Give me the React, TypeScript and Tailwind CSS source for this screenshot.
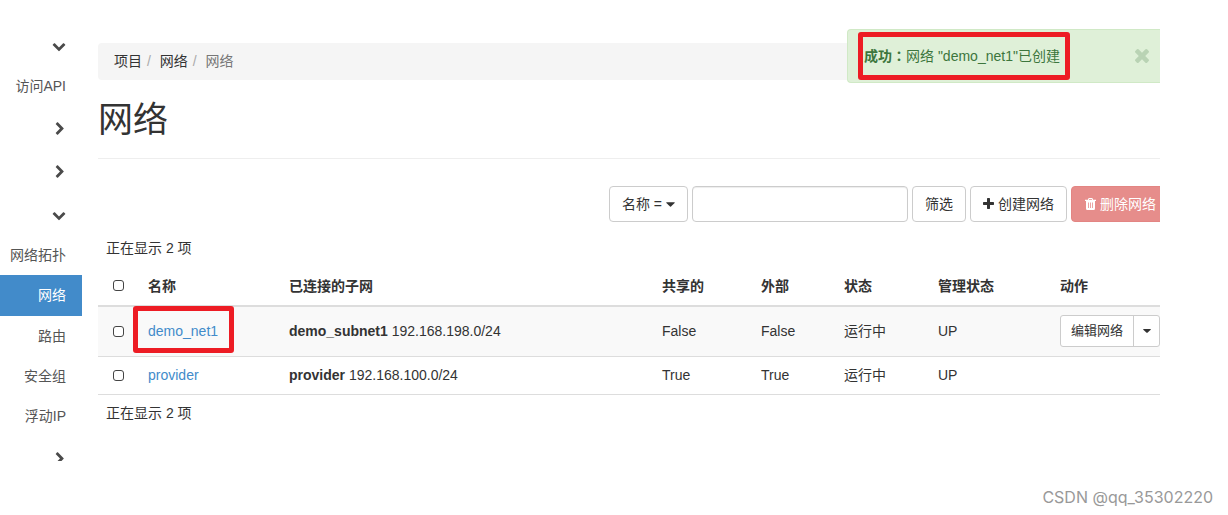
import React from "react";

const paths = {
  down: "M1683 808l-742 741q-19 19-45 19t-45-19l-742-741q-19-19-19-45.500t19-45.500l166-165q19-19 45-19t45 19l531 531 531-531q19-19 45-19t45 19l166 165q19 19 19 45.500t-19 45.500z",
  right: "M1363 877l-742 742q-19 19-45 19t-45-19l-166-166q-19-19-19-45t19-45l531-531-531-531q-19-19-19-45t19-45l166-166q19-19 45-19t45 19l742 742q19 19 19 45t-19 45z",
  plus: "M1600 736v192q0 40-28 68t-68 28h-416v416q0 40-28 68t-68 28h-192q-40 0-68-28t-28-68v-416h-416q-40 0-68-28t-28-68v-192q0-40 28-68t68-28h416v-416q0-40 28-68t68-28h192q40 0 68 28t28 68v416h416q40 0 68 28t28 68z",
  times: "M1490 1322q0 40-28 68l-136 136q-28 28-68 28t-68-28l-294-294-294 294q-28 28-68 28t-68-28l-136-136q-28-28-28-68t28-68l294-294-294-294q-28-28-28-68t28-68l136-136q28-28 68-28t68 28l294 294 294-294q28-28 68-28t68 28l136 136q28 28 28 68t-28 68l-294 294 294 294q28 28 28 68z",
};

function Icon({ name, className, box = "0 0 1792 1792" }: { name: keyof typeof paths; className: string; box?: string }) {
  return (
    <svg viewBox={box} fill="currentColor" aria-hidden="true" className={className}>
      <path d={paths[name]} />
    </svg>
  );
}

function Caret({ className }: { className: string }) {
  return (
    <svg viewBox="0 0 10 5" fill="currentColor" aria-hidden="true" className={className}>
      <path d="M0.600 0H9.400Q10 .3 9.600 .8L5.500 4.800Q5 5.200 4.500 4.800L.4 .8Q0 .3 .6 0Z" />
    </svg>
  );
}

function Trash() {
  return (
    <svg viewBox="0 0 11 12" aria-hidden="true" className="h-3 w-[11px]">
      <path d="M3.500 2V.9Q3.500.5 4 .5H7Q7.500.5 7.500.9V2" fill="none" stroke="currentColor" />
      <path d="M0 1.800H11V3H10V10.500Q10 12 8.700 12H2.300Q1 12 1 10.500V3H0Z" fill="currentColor" />
      <path d="M3.500 4.500V10M5.500 4.500V10M7.500 4.500V10" stroke="#e68d8b" strokeWidth=".8" />
    </svg>
  );
}

function Group({ label, open }: { label: string; open?: boolean }) {
  return (
    <button aria-label={label} className="flex w-full shrink-0 justify-end pt-4 pr-4 pb-[13px] text-[#4a4a4a]">
      <Icon name={open ? "down" : "right"} className={open ? "size-[14px]" : "-mr-[1px] size-[14px]"} />
    </button>
  );
}

function NavLink({ label, active }: { label: string; active?: boolean }) {
  return (
    <a
      href="#"
      className={
        active
          ? "block bg-[#428bca] pt-[10px] pb-[11px] pr-4 text-right text-white"
          : "block py-[10px] pr-4 text-right text-[#555]"
      }
    >
      {label}
    </a>
  );
}

const btn = "flex h-9 shrink-0 items-center rounded border border-[#ccc] bg-white px-3 whitespace-nowrap";
const check = "block size-[11px] appearance-none rounded-[3px] border border-[#444] bg-white checked:bg-[#428bca]";

const rows = [
  { name: "demo_net1", subnet: "demo_subnet1", cidr: "192.168.198.0/24", flag: "False", marked: true },
  { name: "provider", subnet: "provider", cidr: "192.168.100.0/24", flag: "True", marked: false },
];

export default function App() {
  return (
    <div className="bg-white font-['Liberation_Sans','Noto_Sans_CJK_SC',sans-serif] text-sm leading-5 text-[#333]">
      <div className="relative flex gap-4 pr-[68px]">
        <nav aria-label="导航" className="flex h-[461px] w-[82px] shrink-0 flex-col overflow-hidden pt-[23px]">
          <Group label="项目" open />
          <NavLink label="访问API" />
          <Group label="计算" />
          <Group label="卷" />
          <Group label="网络" open />
          <NavLink label="网络拓扑" />
          <NavLink label="网络" active />
          <NavLink label="路由" />
          <NavLink label="安全组" />
          <NavLink label="浮动IP" />
          <Group label="对象存储" />
        </nav>

        <main className="relative min-w-0 flex-1 overflow-hidden pt-[43px]">
          <ol className="flex rounded bg-[#f5f5f5] px-4 pt-2 pb-[9px]">
            <li><a href="#">项目</a></li>
            <li className="before:px-[5px] before:text-[#aaa] before:content-['/\00a0']"><a href="#">网络</a></li>
            <li className="text-[#777] before:px-[5px] before:text-[#aaa] before:content-['/\00a0']">网络</li>
          </ol>

          <h1 className="border-b border-[#eee] pt-5 pb-[18px] text-[35px] leading-10">网络</h1>

          <form className="-mr-[10px] flex justify-end gap-1 pt-[27px]" onSubmit={(e) => e.preventDefault()}>
            <button type="button" className={btn + " gap-1"}>
              名称 =<Caret className="h-[5px] w-[9px]" />
            </button>
            <input
              aria-label="筛选条件"
              className="h-9 w-[216px] min-w-0 rounded border border-[#ccc] px-3 shadow-[inset_0_1px_1px_rgba(0,0,0,0.075)] outline-none"
            />
            <button className={btn}>筛选</button>
            <button type="button" className={btn + " gap-1"}>
              <Icon name="plus" box="192 128 1408 1536" className="h-3 w-[11px]" />
              创建网络
            </button>
            <button
              type="button"
              className="flex h-9 shrink-0 items-center gap-1 rounded border border-[#e38583] bg-[#e68d8b] px-[13px] whitespace-nowrap text-white"
            >
              <Trash />
              删除网络
            </button>
          </form>

          <p className="px-2 pt-4 pb-2">正在显示 2 项</p>
          <table className="w-full table-fixed border-collapse text-left">
            <colgroup>
              <col className="w-[42px]" />
              <col className="w-[141px]" />
              <col />
              <col className="w-[99px]" />
              <col className="w-[83px]" />
              <col className="w-[94px]" />
              <col className="w-[122px]" />
              <col className="w-[108px]" />
            </colgroup>
            <thead>
              <tr className="h-[40px] border-b-2 border-[#ddd]">
                <th className="pl-[15px]"><input type="checkbox" aria-label="全选" className={check} /></th>
                <th className="px-2">名称</th>
                <th className="px-2">已连接的子网</th>
                <th className="px-2">共享的</th>
                <th className="px-2">外部</th>
                <th className="px-2">状态</th>
                <th className="px-2">管理状态</th>
                <th className="px-2">动作</th>
              </tr>
            </thead>
            <tbody>
              {rows.map((r) => (
                <tr key={r.name} className={r.marked ? "h-[50px] border-b border-[#ddd] bg-[#f9f9f9]" : "h-[38px] border-b border-[#ddd]"}>
                  <td className="pl-[15px]"><input type="checkbox" aria-label={r.name} className={check} /></td>
                  <td className="px-2">
                    <span className="relative">
                      <a href="#" className="text-[#428bca]">{r.name}</a>
                      {r.marked && (
                        <span className="pointer-events-none absolute -top-[17px] -right-4 -bottom-[14px] -left-[15px] rounded-[3px] border-[5px] border-[#ed1c24]" />
                      )}
                    </span>
                  </td>
                  <td className="px-2"><b>{r.subnet}</b> {r.cidr}</td>
                  <td className="px-2">{r.flag}</td>
                  <td className="px-2">{r.flag}</td>
                  <td className="px-2">运行中</td>
                  <td className="px-2">UP</td>
                  <td className="pl-2">
                    {r.marked && (
                      <div className="flex h-8 rounded-[3px] border border-[#ccc] bg-white text-[13px]">
                        <button className="flex-1 whitespace-nowrap">编辑网络</button>
                        <button aria-label="更多动作" className="flex w-[26px] items-center justify-center border-l border-[#ccc]">
                          <Caret className="h-1 w-2" />
                        </button>
                      </div>
                    )}
                  </td>
                </tr>
              ))}
            </tbody>
          </table>
          <p className="px-2 py-2">正在显示 2 项</p>

          <div role="alert" className="absolute top-[29px] right-0 flex h-[54px] w-[313px] items-center justify-between rounded-l border border-r-0 border-[#d0e9c6] bg-[#dff0d8] pr-[11px] pl-[10px] text-[#3c763d]">
            <p className="rounded-[3px] border-[5px] border-[#ed1c24] py-[9px] pr-[5px] pl-[1px] whitespace-nowrap">
              <b className="font-['Liberation_Sans','Noto_Sans_CJK_TC',sans-serif]" lang="zh-TW">成功：</b>网络 "demo_net1"已创建
            </p>
            <button aria-label="关闭" className="text-[#b9d3b4]">
              <Icon name="times" box="302 366 1188 1188" className="size-[14px]" />
            </button>
          </div>
        </main>
      </div>
      <footer className="pt-6 pr-[15px] text-right font-['Inter',sans-serif] text-base text-[#999]">CSDN @qq_35302220</footer>
    </div>
  );
}
